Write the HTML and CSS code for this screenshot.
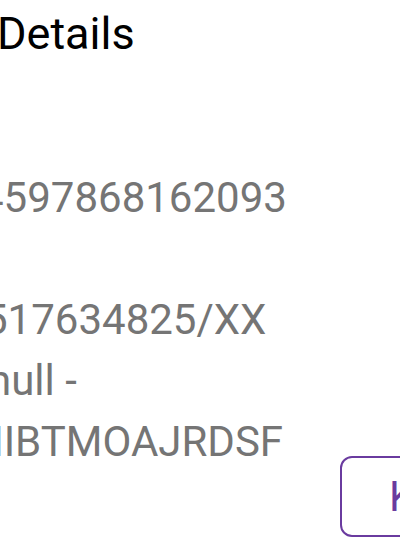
FILE: index.html
```html
<!DOCTYPE html>
<html lang="en">
<head>
<meta charset="utf-8">
<title>Details</title>
<link rel="stylesheet" href="styles.css">
</head>
<body>
<main class="page">
  <h1 class="title">Details</h1>
  <div class="content">
    <div class="values">
      <p class="line line-1">4597868162093</p>
      <p class="line line-gap"></p>
      <p class="line line-2">517634825/XX</p>
      <p class="line line-3">null -</p>
      <p class="line line-4">MIBTMOAJRDSF</p>
    </div>
    <div class="actions">
      <button class="btn" type="button">K</button>
    </div>
  </div>
</main>
</body>
</html>
```
FILE: styles.css
```css
html, body {
  margin: 0;
  padding: 0;
  background: #ffffff;
  overflow: hidden;
}

.page {
  width: 400px;
  height: 550px;
  overflow: hidden;
  font-family: Roboto, "Liberation Sans", sans-serif;
}

.title {
  margin: 0 0 0 -3px;
  padding-top: 11px;
  font-size: 45px;
  line-height: 45px;
  font-weight: 400;
  color: #000000;
}

.content {
  display: flex;
  margin-top: 111px;
}

.values {
  flex: 0 0 340px;
  color: #757575;
  font-size: 42px;
  line-height: 61px;
}

.line {
  margin: 0;
  height: 61px;
  white-space: nowrap;
}

.line-1 { margin-left: -20px; }
.line-2 { margin-left: -16px; }
.line-3 { margin-left: -12px; }
.line-4 { margin-left: -33px; }

.actions {
  flex: 0 0 auto;
  padding-top: 289px;
}

.btn {
  box-sizing: border-box;
  width: 200px;
  height: 81px;
  padding: 0 0 0 47px;
  border: 2px solid #6a3b9f;
  border-radius: 12px;
  background: #ffffff;
  color: #6a3b9f;
  font-family: Roboto, "Liberation Sans", sans-serif;
  font-size: 42px;
  font-weight: 400;
  text-align: left;
  line-height: 1;
}
```
